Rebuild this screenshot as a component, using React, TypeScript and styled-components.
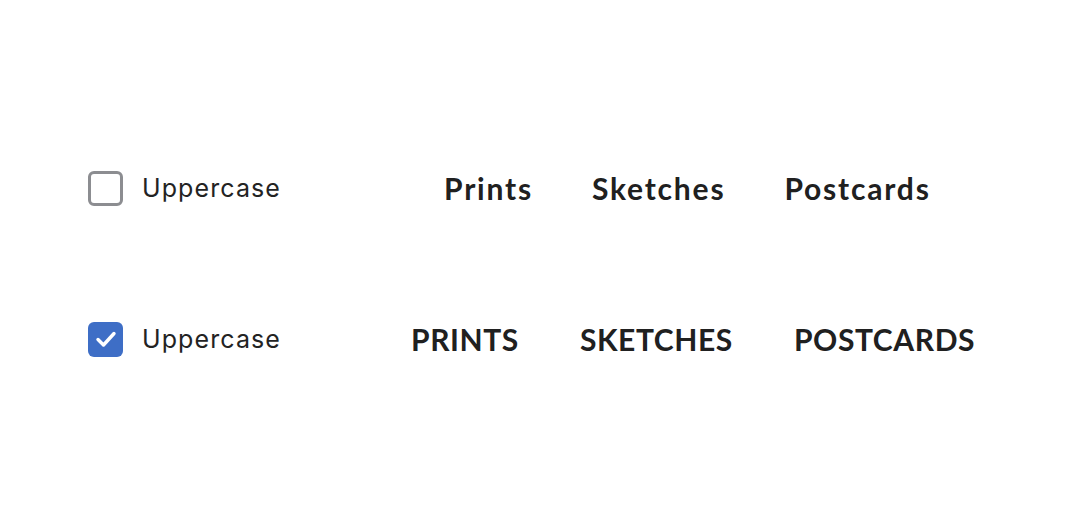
import React from "react";
import styled, { createGlobalStyle } from "styled-components";

const Global = createGlobalStyle`
  html, body { margin: 0; padding: 0; background: #ffffff; }
  body { font-family: "Inter", "Liberation Sans", sans-serif; color: #222222; }
`;

const Page = styled.div`
  width: 1071px;
  height: 514px;
  display: flex;
  flex-direction: column;
  padding-top: 170px;
  box-sizing: border-box;
  gap: 115px;
`;

const Row = styled.div`
  display: flex;
  align-items: center;
  height: 36px;
  padding-left: 88px;
`;

const Check = styled.label`
  display: flex;
  align-items: center;
  gap: 19px;
  width: 300px;
  font-family: "Inter", "Liberation Sans", sans-serif;
  font-size: 25px;
  color: #232323;
  letter-spacing: 1.1px;
`;

const Box = styled.span<{ $checked?: boolean }>`
  width: 35px;
  height: 35px;
  box-sizing: border-box;
  border-radius: 6px;
  display: flex;
  align-items: center;
  justify-content: center;
  border: ${(p) => (p.$checked ? "none" : "3px solid #8c8d91")};
  background: ${(p) => (p.$checked ? "#3e6ec6" : "#ffffff")};
`;

const Nav = styled.nav<{ $offset: number; $gap: number }>`
  display: flex;
  gap: ${(p) => p.$gap}px;
  margin-left: ${(p) => p.$offset}px;
`;

const Item = styled.span<{ $upper?: boolean }>`
  font-family: "Lato", "Noto Sans", sans-serif;
  font-weight: 700;
  font-size: 30px;
  color: #202020;
  text-transform: ${(p) => (p.$upper ? "uppercase" : "none")};
  letter-spacing: ${(p) => (p.$upper ? "0.6px" : "1.8px")};
`;

const items = ["Prints", "Sketches", "Postcards"];

function Tick() {
  return (
    <svg width="22" height="18" viewBox="0 0 22 18" fill="none">
      <path d="M3 9.5 L8.5 15 L19 3.5" stroke="#ffffff" strokeWidth="3.4" strokeLinecap="round" strokeLinejoin="round" />
    </svg>
  );
}

export default function App() {
  return (
    <>
      <Global />
      <Page>
        <Row>
          <Check>
            <Box />
            Uppercase
          </Check>
          <Nav $offset={56} $gap={59}>
            {items.map((t) => (
              <Item key={t}>{t}</Item>
            ))}
          </Nav>
        </Row>
        <Row>
          <Check>
            <Box $checked>
              <Tick />
            </Box>
            Uppercase
          </Check>
          <Nav $offset={23} $gap={61}>
            {items.map((t) => (
              <Item key={t} $upper>
                {t}
              </Item>
            ))}
          </Nav>
        </Row>
      </Page>
    </>
  );
}
